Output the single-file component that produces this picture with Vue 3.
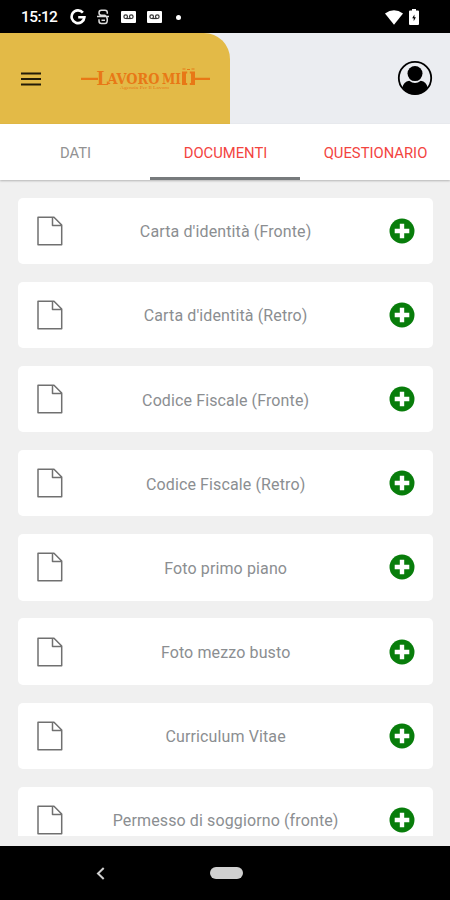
<script setup>
const tabs = [
  { label: 'DATI', color: 'grey' },
  { label: 'DOCUMENTI', color: 'red', active: true },
  { label: 'QUESTIONARIO', color: 'red' },
]
const documents = [
  "Carta d'identità (Fronte)",
  "Carta d'identità (Retro)",
  'Codice Fiscale (Fronte)',
  'Codice Fiscale (Retro)',
  'Foto primo piano',
  'Foto mezzo busto',
  'Curriculum Vitae',
  'Permesso di soggiorno (fronte)',
]
</script>

<template>
  <div class="screen">
    <div class="status">
      <span class="time">15:12</span>
      <svg class="google" width="16" height="16" viewBox="0 0 16 16" fill="none" stroke="#fff" stroke-width="2.6">
        <path d="M12.9 3.6A6.4 6.4 0 1 0 14.4 8.3H8.2" />
      </svg>
      <svg class="strike" width="12" height="16" viewBox="0 0 12 16" fill="none" stroke="#ddd" stroke-width="1.5">
        <path d="M10.3 4.8V3.5Q10.3 1.2 8 1.2H4.4Q2 1.2 2 3.7T4.4 6.3H8Q10.3 7.5 10.3 10.7Q10.3 14.5 8 14.5H4.4Q2 14.5 2 12V10.3M0 7.6H12M4.5 11.2H8" />
      </svg>
      <svg v-for="n in 2" :key="n" class="voicemail" width="15" height="12" viewBox="0 0 15 12">
        <rect width="15" height="12" rx="1" fill="#fff" />
        <g fill="none" stroke="#333" stroke-width="1.2">
          <circle cx="4.7" cy="5.7" r="1.8" /><circle cx="10.3" cy="5.7" r="1.8" /><path d="M4.7 7.5H10.3" />
        </g>
      </svg>
      <span class="dot"></span>
      <span class="spacer"></span>
      <svg class="wifi" width="18" height="15" viewBox="0 0 18 15"><path d="M0 3.5Q9-3 18 3.5L9 14.8Z" fill="#fff" /></svg>
      <svg class="battery" width="10" height="16" viewBox="0 0 10 16">
        <path d="M3 0H7V1.5H9Q10 1.5 10 2.5V15Q10 16 9 16H1Q0 16 0 15V2.5Q0 1.5 1 1.5H3Z" fill="#fff" />
        <path d="M5.4 5.5L3.2 9.3H4.7V12.3L6.9 8.3H5.4Z" fill="#000" />
      </svg>
    </div>

    <header class="header">
      <div class="brand">
        <svg class="menu" width="20" height="14" viewBox="0 0 20 14" stroke="#241c08" stroke-width="2">
          <path d="M0 1.5H20M0 7H20M0 12.5H20" />
        </svg>
        <svg class="logo" width="130" height="26" viewBox="0 0 130 26" fill="#e87816">
          <path d="M0 11.7H17V14H0ZM112 11.7H129V14H112Z" />
          <g class="word">
            <text x="15.5" y="18.8" font-size="18" textLength="12" lengthAdjust="spacingAndGlyphs">L</text>
            <text x="26.5" y="17.8" font-size="14" textLength="52" lengthAdjust="spacingAndGlyphs">AVORO</text>
            <text x="81" y="17.8" font-size="14" textLength="19" lengthAdjust="spacingAndGlyphs">MI</text>
          </g>
          <path d="M101 5.5H106.2V7.5H105V17H106.2V19H101ZM108.8 5.5H114V19H108.8V17H110V7.5H108.8Z" />
          <path d="M101.5 3H104.5M106 3.5H109M110.5 3H113.5" stroke="#e87816" stroke-width="1.2" />
          <text class="tagline" x="39" y="22.6" font-size="3.8" textLength="49" lengthAdjust="spacingAndGlyphs">Agenzia Per Il Lavoro</text>
        </svg>
      </div>
      <svg class="profile" width="36" height="36" viewBox="0 0 36 36">
        <circle cx="18" cy="18" r="16.2" fill="none" stroke="#000" stroke-width="1.8" />
        <circle cx="18" cy="13.6" r="7.5" />
        <path d="M5.4 27.5Q6.5 21.8 12.2 20.7Q18 25.2 23.8 20.7Q29.5 21.8 30.6 27.5Q26 34.4 18 34.4T5.4 27.5Z" />
      </svg>
    </header>

    <nav class="tabs">
      <div v-for="tab in tabs" :key="tab.label" class="tab" :class="[tab.color, { active: tab.active }]">
        <span>{{ tab.label }}</span>
      </div>
    </nav>

    <main class="list">
      <div v-for="name in documents" :key="name" class="card">
        <svg class="file" width="26" height="30" viewBox="0 0 26 30" fill="none" stroke="#707070" stroke-width="1.5">
          <path d="M1 1.2H17L24.7 9V28.8H1ZM15.5 1.2V9.4H24.7" stroke-linejoin="round" />
        </svg>
        <span class="name">{{ name }}</span>
        <svg class="add" width="26" height="26" viewBox="0 0 26 26">
          <circle cx="13" cy="13" r="12.5" fill="#087d0b" />
          <path d="M13 5.7V20.3M5.7 13H20.3" stroke="#fff" stroke-width="4.4" />
        </svg>
      </div>
    </main>

    <footer class="navbar">
      <svg class="back" width="9" height="13" viewBox="0 0 9 13" fill="none" stroke="#d0d0d0" stroke-width="2">
        <path d="M7.7 1L2 6.5L7.7 12" />
      </svg>
      <span class="pill"></span>
    </footer>
  </div>
</template>

<style>
body { margin: 0; }
</style>

<style scoped>
.screen {
  width: 450px;
  height: 900px;
  display: flex;
  flex-direction: column;
  overflow: hidden;
  background: #f0f0f0;
  font-family: Roboto, "Liberation Sans", sans-serif;
}
.status {
  height: 32.5px;
  flex: none;
  box-sizing: border-box;
  padding: 2px 31px 0 21px;
  display: flex;
  align-items: center;
  background: #000;
  color: #fff;
}
.time { width: 49px; font-size: 15.5px; font-weight: 500; letter-spacing: -0.6px; }
.strike { margin-left: 11px; }
.voicemail { margin-left: 12px; }
.voicemail + .voicemail { margin-left: 11px; }
.dot { width: 5px; height: 5px; margin-left: 14px; border-radius: 50%; background: #fff; }
.spacer { flex: 1; }
.battery { margin-left: 6px; }
.header {
  height: 91.5px;
  flex: none;
  box-sizing: border-box;
  padding-right: 17px;
  display: flex;
  align-items: center;
  justify-content: space-between;
  background: #ebedf1;
}
.brand {
  width: 229.5px;
  height: 91.5px;
  box-sizing: border-box;
  padding-left: 21px;
  display: flex;
  align-items: center;
  border-radius: 0 26px 0 0;
  background: #e3ba47;
}
.menu { margin-top: 1px; }
.logo { margin: 2px 0 0 40px; }
.word { font-family: "DejaVu Serif", "Liberation Serif", serif; font-weight: 700; }
.tagline { font-family: "Liberation Serif", serif; }
.tabs {
  height: 56px;
  flex: none;
  display: grid;
  grid-template-columns: repeat(3, 1fr);
  background: #fff;
  box-shadow: 0 1px 2px rgba(0, 0, 0, 0.25);
}
.tab {
  box-sizing: border-box;
  padding: 5px 0 0 1px;
  display: flex;
  align-items: center;
  justify-content: center;
  border-bottom: 3px solid transparent;
  font-size: 14.8px;
}
.tab.active { border-bottom-color: #777a7c; }
.grey { color: #929292; }
.red { color: #f3443f; }
.list {
  height: 656px;
  flex: none;
  box-sizing: border-box;
  padding: 17.5px 17.5px 0 18.3px;
  display: flex;
  flex-direction: column;
  gap: 17.9px;
  overflow: hidden;
}
.card {
  height: 66.3px;
  flex: none;
  box-sizing: border-box;
  padding: 0 18px 0 18.5px;
  display: grid;
  grid-template-columns: 26px 1fr 26px;
  align-items: center;
  border-radius: 5px;
  background: #fff;
}
.name {
  padding-top: 2px;
  text-align: center;
  font-size: 16px;
  letter-spacing: 0.12px;
  color: #8b8e91;
}
.navbar {
  height: 54px;
  margin-top: auto;
  flex: none;
  display: flex;
  align-items: center;
  box-sizing: border-box;
  padding-left: 95.5px;
  background: #000;
}
.pill { width: 33px; height: 12px; margin-left: 105px; border-radius: 6px; background: #d0d0d0; }
</style>
